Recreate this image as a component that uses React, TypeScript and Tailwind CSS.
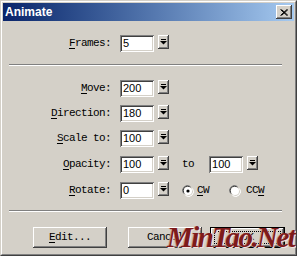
const mono = "font-['Liberation_Mono',monospace] text-[11px] tracking-[-0.6px] text-black"

function U({ c }: { c: string }) {
    return <span className="underline underline-offset-2">{c}</span>
}

function Spin({ value, first }: { value: string; first?: boolean }) {
    return (
        <div className={"flex items-start " + (first ? "ml-[9px]" : "")}>
            <div className="w-[34px] h-[17px] bg-white pl-[3px] flex items-center text-[11px] text-black font-['Liberation_Sans',sans-serif] shadow-[inset_1px_1px_#808080,inset_-1px_-1px_#fff,inset_2px_2px_#404040,inset_-2px_-2px_#d4d0c8]">
                {value}
            </div>
            <div className="ml-[4px] w-[11px] h-[14px] bg-[#d4d0c8] flex items-center justify-center shadow-[inset_-1px_-1px_#404040,inset_1px_1px_#fff,inset_-2px_-2px_#808080]">
                <svg width="7" height="6" viewBox="0 0 7 6">
                    <rect x="1" y="0" width="5" height="1" fill="#000" />
                    <polygon points="0,2 7,2 3.5,5.5" fill="#000" />
                </svg>
            </div>
        </div>
    )
}

function Row({ label, value, mt, children }: { label: React.ReactNode; value: string; mt: string; children?: React.ReactNode }) {
    return (
        <div className={"flex items-center h-[17px] " + mt}>
            <div className={"w-[108px] text-right " + mono}>{label}</div>
            <Spin value={value} first />
            {children}
        </div>
    )
}

function Radio({ checked }: { checked?: boolean }) {
    return (
        <svg width="12" height="12" viewBox="0 0 12 12">
            <path d="M1.5 8.5 A5 5 0 0 1 8.5 1.5" stroke="#808080" strokeWidth="1" fill="none" />
            <path d="M2.5 8.5 A4 4 0 0 1 8.5 2.5" stroke="#404040" strokeWidth="1" fill="none" />
            <circle cx="6" cy="6" r="4" fill="#fff" />
            <path d="M10.5 3.5 A5 5 0 0 1 3.5 10.5" stroke="#fff" strokeWidth="1" fill="none" />
            {checked && <circle cx="6" cy="6" r="1.6" fill="#000" />}
        </svg>
    )
}

function Sep({ mt }: { mt: string }) {
    return (
        <div className={"ml-[6px] w-[273px] " + mt}>
            <div className="h-px bg-[#808080]" />
            <div className="h-px bg-white" />
        </div>
    )
}

function Btn({ children, def }: { children: React.ReactNode; def?: boolean }) {
    if (def) {
        return (
            <div className="w-[75px] h-[21px] border border-black">
                <div className="h-full flex items-center justify-center p-[3px] shadow-[inset_-1px_-1px_#404040,inset_1px_1px_#fff,inset_-2px_-2px_#808080]">
                    <div className={"w-full h-full border border-dotted border-black flex items-center justify-center " + mono}>{children}</div>
                </div>
            </div>
        )
    }
    return (
        <div className={"w-[74px] h-[21px] flex items-center justify-center shadow-[inset_-1px_-1px_#404040,inset_1px_1px_#fff,inset_-2px_-2px_#808080] " + mono}>
            {children}
        </div>
    )
}

export default function App() {
    return (
        <div className="w-[297px] h-[256px] relative overflow-hidden bg-[#d4d0c8] border border-t-[#d4d0c8] border-l-[#d4d0c8] border-r-[#404040] border-b-[#404040]">
            <div className="h-full border border-t-white border-l-white border-r-[#808080] border-b-[#808080] p-px">
                <div className="h-[18px] flex items-center justify-between px-[2px] bg-linear-to-r from-[#0a246a] to-[#a6caf0]">
                    <span className="text-white font-bold text-[12px] font-['Liberation_Sans',sans-serif]">Animate</span>
                    <div className="w-[16px] h-[14px] bg-[#d4d0c8] flex items-center justify-center shadow-[inset_-1px_-1px_#404040,inset_1px_1px_#fff,inset_-2px_-2px_#808080]">
                        <svg width="8" height="7" viewBox="0 0 8 7">
                            <path d="M0.5 0.5 L7 6.5 M1.5 0.5 L8 6.5 M7 0.5 L0.5 6.5 M8 0.5 L1.5 6.5" stroke="#000" strokeWidth="1" />
                        </svg>
                    </div>
                </div>

                <Row label={<><U c="F" />rames:</>} value="5" mt="mt-[14px]" />
                <Sep mt="mt-[12px]" />

                <Row label={<><U c="M" />ove:</>} value="200" mt="mt-[14px]" />
                <Row label={<><U c="D" />irection:</>} value="180" mt="mt-[8px]" />
                <Row label={<><U c="S" />cale to:</>} value="100" mt="mt-[8px]" />
                <Row label={<><U c="O" />pacity:</>} value="100" mt="mt-[9px]">
                    <span className={"ml-[13px] " + mono}>to</span>
                    <div className="ml-[15px]">
                        <Spin value="100" />
                    </div>
                </Row>
                <Row label={<><U c="R" />otate:</>} value="0" mt="mt-[9px]">
                    <div className="ml-[13px] flex items-center">
                        <Radio checked />
                        <span className={"ml-[3px] " + mono}><U c="C" />W</span>
                    </div>
                    <div className="ml-[20px] flex items-center">
                        <Radio />
                        <span className={"ml-[5px] " + mono}>CC<U c="W" /></span>
                    </div>
                </Row>

                <Sep mt="mt-[11px]" />

                <div className="flex mt-[15px] ml-[30px]">
                    <Btn><U c="E" />dit...</Btn>
                    <div className="ml-[21px]">
                        <Btn>Cancel</Btn>
                    </div>
                    <div className="ml-[8px]">
                        <Btn def>OK</Btn>
                    </div>
                </div>
            </div>

            <div className="absolute left-[166px] top-[215px] font-['Liberation_Serif',serif] italic font-bold text-[29px] tracking-[-1.6px] text-[#7e1b1b] [text-shadow:1px_1px_0_#f2e4e0,-1px_0_0_#c89a92]">
                MinTao.Net
            </div>
        </div>
    )
}
